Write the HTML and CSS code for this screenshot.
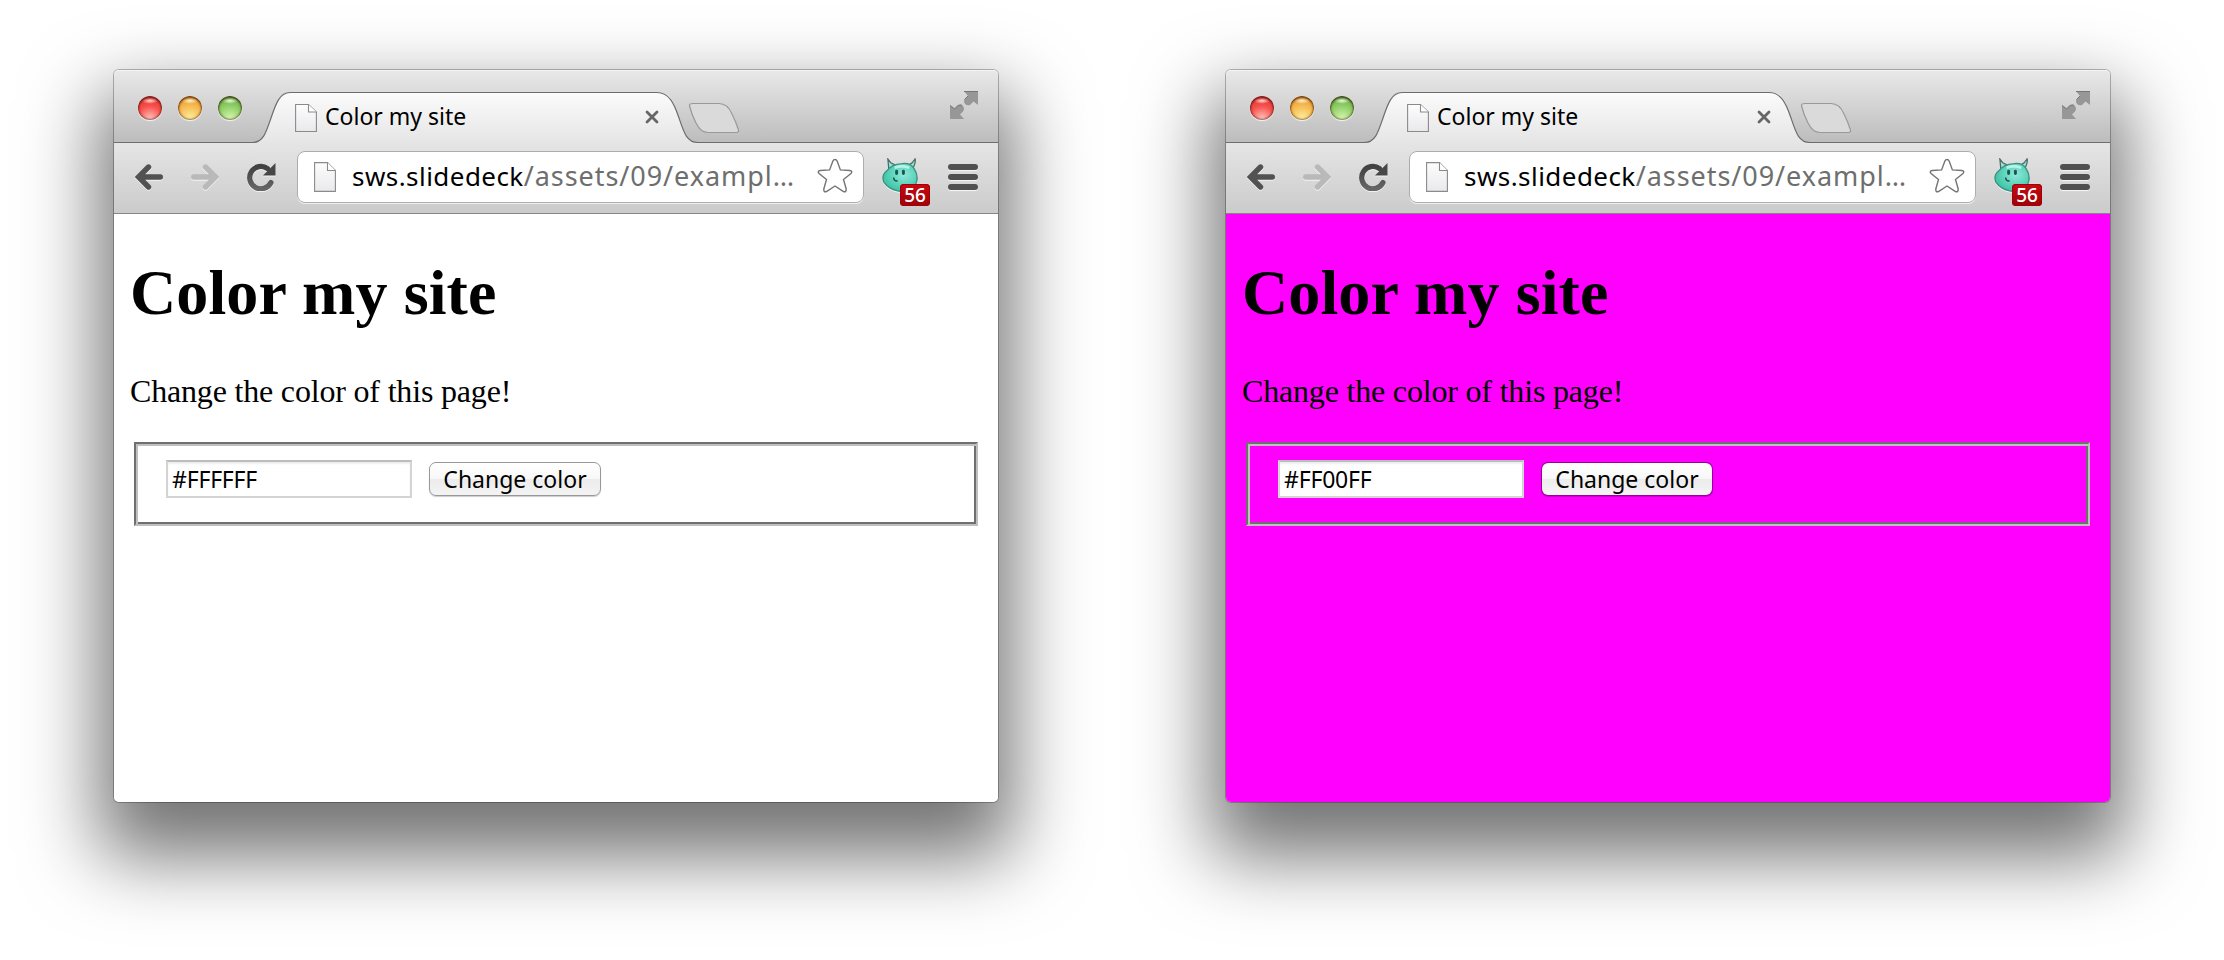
FILE: index.html
```html
<!DOCTYPE html>
<html lang="en">
<head>
<meta charset="utf-8">
<title>Color my site</title>
<link rel="stylesheet" href="styles.css">
</head>
<body>
<svg class="defs" width="0" height="0" aria-hidden="true">
  <defs>
    <linearGradient id="tabfill" x1="0" y1="0" x2="0" y2="1"><stop offset="0" stop-color="#fbfbfb"/><stop offset="1" stop-color="#e5e5e5"/></linearGradient>
    <linearGradient id="pagefill" x1="0" y1="0" x2="0" y2="1"><stop offset="0" stop-color="#fdfdfd"/><stop offset="1" stop-color="#e9e9ec"/></linearGradient>
    <linearGradient id="dark" x1="0" y1="0" x2="0" y2="1"><stop offset="0" stop-color="#414141"/><stop offset="1" stop-color="#666"/></linearGradient>
    <radialGradient id="mint" cx=".6" cy=".4" r=".6"><stop offset="0" stop-color="#8feadb"/><stop offset="1" stop-color="#3fc4a6"/></radialGradient>
    <symbol id="tabshape" viewBox="0 0 884 74">
      <path d="M0 73.5H138C149 73.500 152 63 157 48C162 33 166 22.500 176 22.500H546C557 22.500 560 33 565 48C570 63 574 72.500 584 72.500H884V74H0Z" fill="url(#tabfill)"/>
      <path d="M0 72.500H138C149 72.500 152 63 157 48C162 33 166 22.500 176 22.500H543C555 22.500 560 33 565 48C570 63 573 72.500 584 72.500H884" fill="none" stroke="#6c6c6c" stroke-width="1.200"/>
      <path d="M579 33.500H605C611 33.500 615 37 618 44C621 50 623 55 624.500 60Q625 62.500 622 62.500H594C588 62.500 585 59 582 53C579 47 577 42 575.500 36Q575 33.500 579 33.500Z" fill="#dadada" stroke="#999" stroke-width="1.200"/>
    </symbol>
    <symbol id="page" viewBox="0 0 22 30" preserveAspectRatio="none">
      <path d="M.6 .6H13.500L21.400 8.500V29.400H.6Z" fill="url(#pagefill)" stroke="#8a8a8a" stroke-width="1.100"/>
      <path d="M13.500 .6V8.500H21.400" fill="#fff" stroke="#8a8a8a" stroke-width="1.100"/>
    </symbol>
    <symbol id="close" viewBox="0 0 14 14"><path d="M2 2L12 12M12 2L2 12" stroke="#666" stroke-width="2.800" stroke-linecap="round"/></symbol>
    <symbol id="full" viewBox="0 0 28 28">
      <path d="M14 0H28V14L23.500 10.500L20 14Q17 15 15 13Q13 10 15 8L18 5Z M14 28H0V14L4.500 17.500L8 14.500Q11 13 13 15Q15 18 13 20.500L10 23.500Z" fill="#979797"/>
      <path d="M14 .5H28M14.500 8.500L18 5M0 14.500L4.500 17.800L8 14.500Q10 13.500 12 14.300" fill="none" stroke="#777" stroke-width="1"/>
    </symbol>
    <symbol id="arrow" viewBox="0 0 28 26">
      <path d="M13.500 3L3.500 13L13.500 23M4 13H25.300" fill="none" stroke="currentColor" stroke-width="5.400" stroke-linecap="round" stroke-linejoin="miter"/>
    </symbol>
    <symbol id="reload" viewBox="0 0 30 28">
      <path d="M20.500 5.600A11.200 11.200 0 1 0 24 19.500" fill="none" stroke="url(#dark)" stroke-width="5.200" stroke-linecap="round"/>
      <path d="M28.500 0V12.500H16Z" fill="#474747"/>
    </symbol>
    <symbol id="star" viewBox="0 0 36 36">
      <path d="M18 1.500Q19.500 1.500 20.200 3.300L23.400 11.900L32.800 12.500Q36 13.200 34 15.500L26.500 21.500L29.200 31Q29.500 34.500 26.500 33.500L18 28L9.500 33.500Q6.500 34.500 6.800 31L9.500 21.500L2 15.500Q0 13.200 3.200 12.500L12.600 11.900L15.800 3.300Q16.500 1.500 18 1.500Z" fill="#fff" stroke="#747474" stroke-width="1.400"/>
    </symbol>
    <symbol id="critter" viewBox="0 0 38 38">
      <path d="M7 12L6 1L9 5L15 8Z M26 8L31 5L34 1Q35 5 31 12Z" fill="#9adfd3" stroke="#456b66" stroke-width="1.300"/>
      <path d="M5 13Q11 6 19 6Q29 4 33 11Q38 19 35 26Q29 35 17 34Q7 32 2 25Q-1 18 5 13Z" fill="url(#mint)" stroke="#3d8f81" stroke-width="1.400"/>
      <path d="M13 10Q20 7 28 10" stroke="#b5f2e9" stroke-width="3" fill="none"/>
      <path d="M15 13.500V16M22 13.500V16" stroke="#19574f" stroke-width="3" stroke-linecap="round"/>
      <path d="M12 20Q12 24 16 23.500" stroke="#19574f" stroke-width="1.600" fill="none"/>
    </symbol>
  </defs>
</svg>

<main class="stage">
  <section class="window">
    <header class="tabstrip">
      <svg class="tabshape"><use href="#tabshape"/></svg>
      <div class="lights"><i class="light red"></i><i class="light amber"></i><i class="light green"></i></div>
      <div class="tab">
        <svg class="tab-page"><use href="#page"/></svg>
        <span class="tab-title">Color my site</span>
        <svg class="tab-close"><use href="#close"/></svg>
      </div>
      <svg class="fullscreen"><use href="#full"/></svg>
    </header>
    <nav class="toolbar">
      <svg class="back"><use href="#arrow"/></svg>
      <svg class="forward"><use href="#arrow"/></svg>
      <svg class="reload"><use href="#reload"/></svg>
      <div class="omnibox">
        <svg class="url-page"><use href="#page"/></svg>
        <span class="url"><span class="host">sws.slidedeck</span><span class="path">/assets/09/exampl…</span></span>
        <svg class="star"><use href="#star"/></svg>
      </div>
      <div class="extension"><svg class="critter"><use href="#critter"/></svg><span class="badge">56</span></div>
      <div class="menu"><i></i><i></i><i></i></div>
    </nav>
    <article class="page white">
      <h1>Color my site</h1>
      <p>Change the color of this page!</p>
      <div class="fieldset"><span class="field">#FFFFFF</span><span class="button">Change color</span></div>
    </article>
  </section>

  <section class="window">
    <header class="tabstrip">
      <svg class="tabshape"><use href="#tabshape"/></svg>
      <div class="lights"><i class="light red"></i><i class="light amber"></i><i class="light green"></i></div>
      <div class="tab">
        <svg class="tab-page"><use href="#page"/></svg>
        <span class="tab-title">Color my site</span>
        <svg class="tab-close"><use href="#close"/></svg>
      </div>
      <svg class="fullscreen"><use href="#full"/></svg>
    </header>
    <nav class="toolbar">
      <svg class="back"><use href="#arrow"/></svg>
      <svg class="forward"><use href="#arrow"/></svg>
      <svg class="reload"><use href="#reload"/></svg>
      <div class="omnibox">
        <svg class="url-page"><use href="#page"/></svg>
        <span class="url"><span class="host">sws.slidedeck</span><span class="path">/assets/09/exampl…</span></span>
        <svg class="star"><use href="#star"/></svg>
      </div>
      <div class="extension"><svg class="critter"><use href="#critter"/></svg><span class="badge">56</span></div>
      <div class="menu"><i></i><i></i><i></i></div>
    </nav>
    <article class="page magenta">
      <h1>Color my site</h1>
      <p>Change the color of this page!</p>
      <div class="fieldset"><span class="field">#FF00FF</span><span class="button">Change color</span></div>
    </article>
  </section>
</main>
</body>
</html>
```

FILE: styles.css
```css
* { box-sizing: border-box; }
body { margin: 0; background: #fff; overflow: hidden; }
svg { display: block; flex: none; }
.defs { position: absolute; }
.stage { display: flex; gap: 228px; width: 2224px; height: 960px; padding: 70px 114px 0; }
.window {
  width: 884px; height: 732px; flex: none; display: flex; flex-direction: column;
  border-radius: 5px;
  box-shadow: 0 0 0 1px rgba(0,0,0,.26), 0 40px 76px 15px rgba(0,0,0,.55);
  font-family: "Noto Sans", "Open Sans", sans-serif; color: #000;
}

.tabstrip {
  position: relative; height: 73px; display: flex; flex: none;
  background: linear-gradient(#e9e9e9, #bcbcbc); border-radius: 5px 5px 0 0;
  box-shadow: inset 0 1px #f4f4f4;
}
.tabshape { position: absolute; left: 0; top: 0; width: 884px; height: 74px; }
.lights { display: flex; gap: 16px; padding: 26px 0 0 24px; width: 181px; flex: none; }
.light { width: 24px; height: 24px; border-radius: 50%; box-shadow: 0 1px 1px rgba(255,255,255,.8), inset 0 0 2px 1px rgba(60,20,0,.55), inset 0 2px 2px rgba(50,10,0,.4); }
.red { background: radial-gradient(ellipse 8px 3px at 50% 20%, #ffd9d5, transparent), radial-gradient(circle at 50% 95%, #ffc4c0 0, #f9504b 50%, #d62b2e 100%); }
.amber { background: radial-gradient(ellipse 8px 3px at 50% 20%, #fff1d0, transparent), radial-gradient(circle at 50% 95%, #fff0a0 0, #f6b64c 55%, #d88a25 100%); }
.green { background: radial-gradient(ellipse 8px 3px at 50% 20%, #e8fadd, transparent), radial-gradient(circle at 50% 95%, #d9f7b0 0, #8acb62 55%, #559b3a 100%); }
.tab { position: relative; display: flex; width: 364px; height: 50px; margin-top: 23px; }
.tab-page { width: 22px; height: 28px; margin-top: 11px; }
.tab-title { font-size: 23px; line-height: 32px; margin: 7px 0 0 8px; white-space: nowrap; }
.tab-close { width: 14px; height: 14px; margin: 17px 0 0 auto; }
.fullscreen { position: relative; width: 28px; height: 28px; margin: 21px 20px 0 auto; }

.toolbar {
  position: relative; height: 71px; flex: none; display: flex; align-items: flex-start;
  background: linear-gradient(#e5e5e5, #cbcbcb); border-bottom: 1px solid #858585; padding-left: 21px;
}
.toolbar svg { filter: drop-shadow(0 1px 0 rgba(255,255,255,.7)); }
.back, .forward { width: 28px; height: 26px; margin-top: 21px; color: #525252; }
.forward { margin-left: 28px; color: #b9b9b9; transform: scaleX(-1); }
.reload { width: 30px; height: 28px; margin: 20px 0 0 28px; }
.omnibox {
  display: flex; width: 567px; height: 52px; margin: 8px 0 0 20px; background: #fff; flex: none;
  border: 1px solid #adadad; border-radius: 8px; box-shadow: 0 1px rgba(255,255,255,.7);
}
.url-page { width: 22px; height: 30px; margin: 10px 0 0 16px; }
.url { display: block; width: 448px; font-size: 26px; line-height: 36px; margin: 6px 0 0 16px; white-space: nowrap; }
.host { letter-spacing: .45px; }
.path { color: #6e6e6e; font-size: 27px; letter-spacing: .95px; }
.star { width: 36px; height: 36px; margin: 6px 0 0 17px; }
.extension { position: relative; width: 48px; margin: 15px 0 0 18px; }
.critter { width: 37px; height: 37px; }
.badge {
  position: absolute; left: 18px; top: 26px; width: 30px; height: 22px; border-radius: 4px;
  background: linear-gradient(#c90a12, #9d0208); box-shadow: inset 0 0 0 1px #a00008; color: #fff;
  font: 500 19px/22px "Noto Sans", sans-serif; text-align: center;
}
.menu { display: flex; flex-direction: column; gap: 4px; margin: 21px 0 0 18px; }
.menu i { width: 30px; height: 6px; border-radius: 3px; background: #505050; box-shadow: 0 1px 1px rgba(255,255,255,.8); }

.page { flex: 1; overflow: hidden; padding: 0 16px; border-radius: 0 0 5px 5px; font-family: "Liberation Serif", serif; font-size: 32px; }
.white { background: #fff; }
.magenta { background: #f0f; }
h1 { font-size: 64px; line-height: 74px; margin: 42px 0 43px; letter-spacing: .12px; }
p { line-height: 37px; margin: 0 0 32px; letter-spacing: -.18px; }
.fieldset {
  display: flex; align-items: flex-start; height: 84px; margin: 0 4px; padding: 14px 30px;
  border: 2px solid; border-color: #6f6f6f #bfbfbf #bfbfbf #6f6f6f;
  box-shadow: inset 2px 2px #bfbfbf, inset -2px -2px #6f6f6f;
  font-family: "Noto Sans", sans-serif; font-size: 23px;
}
.field { width: 246px; height: 38px; margin-top: 2px; padding-left: 4px; line-height: 34px; background: #fff; border: 2px solid #d4d4d4; border-top-color: #bcbcbc; box-shadow: inset 0 2px 2px #eee; letter-spacing: -.2px; }
.button {
  width: 172px; height: 34px; margin: 4px 0 0 17px; border: 1px solid #989898; border-radius: 7px; line-height: 33px; text-align: center;
  background: linear-gradient(#fff 0, #f7f7f7 50%, #ececec 51%, #f4f4f4 100%); box-shadow: 0 1px 1px rgba(0,0,0,.2);
}
.magenta .button { border-color: rgba(0,0,0,.4); background-clip: padding-box; }
```
